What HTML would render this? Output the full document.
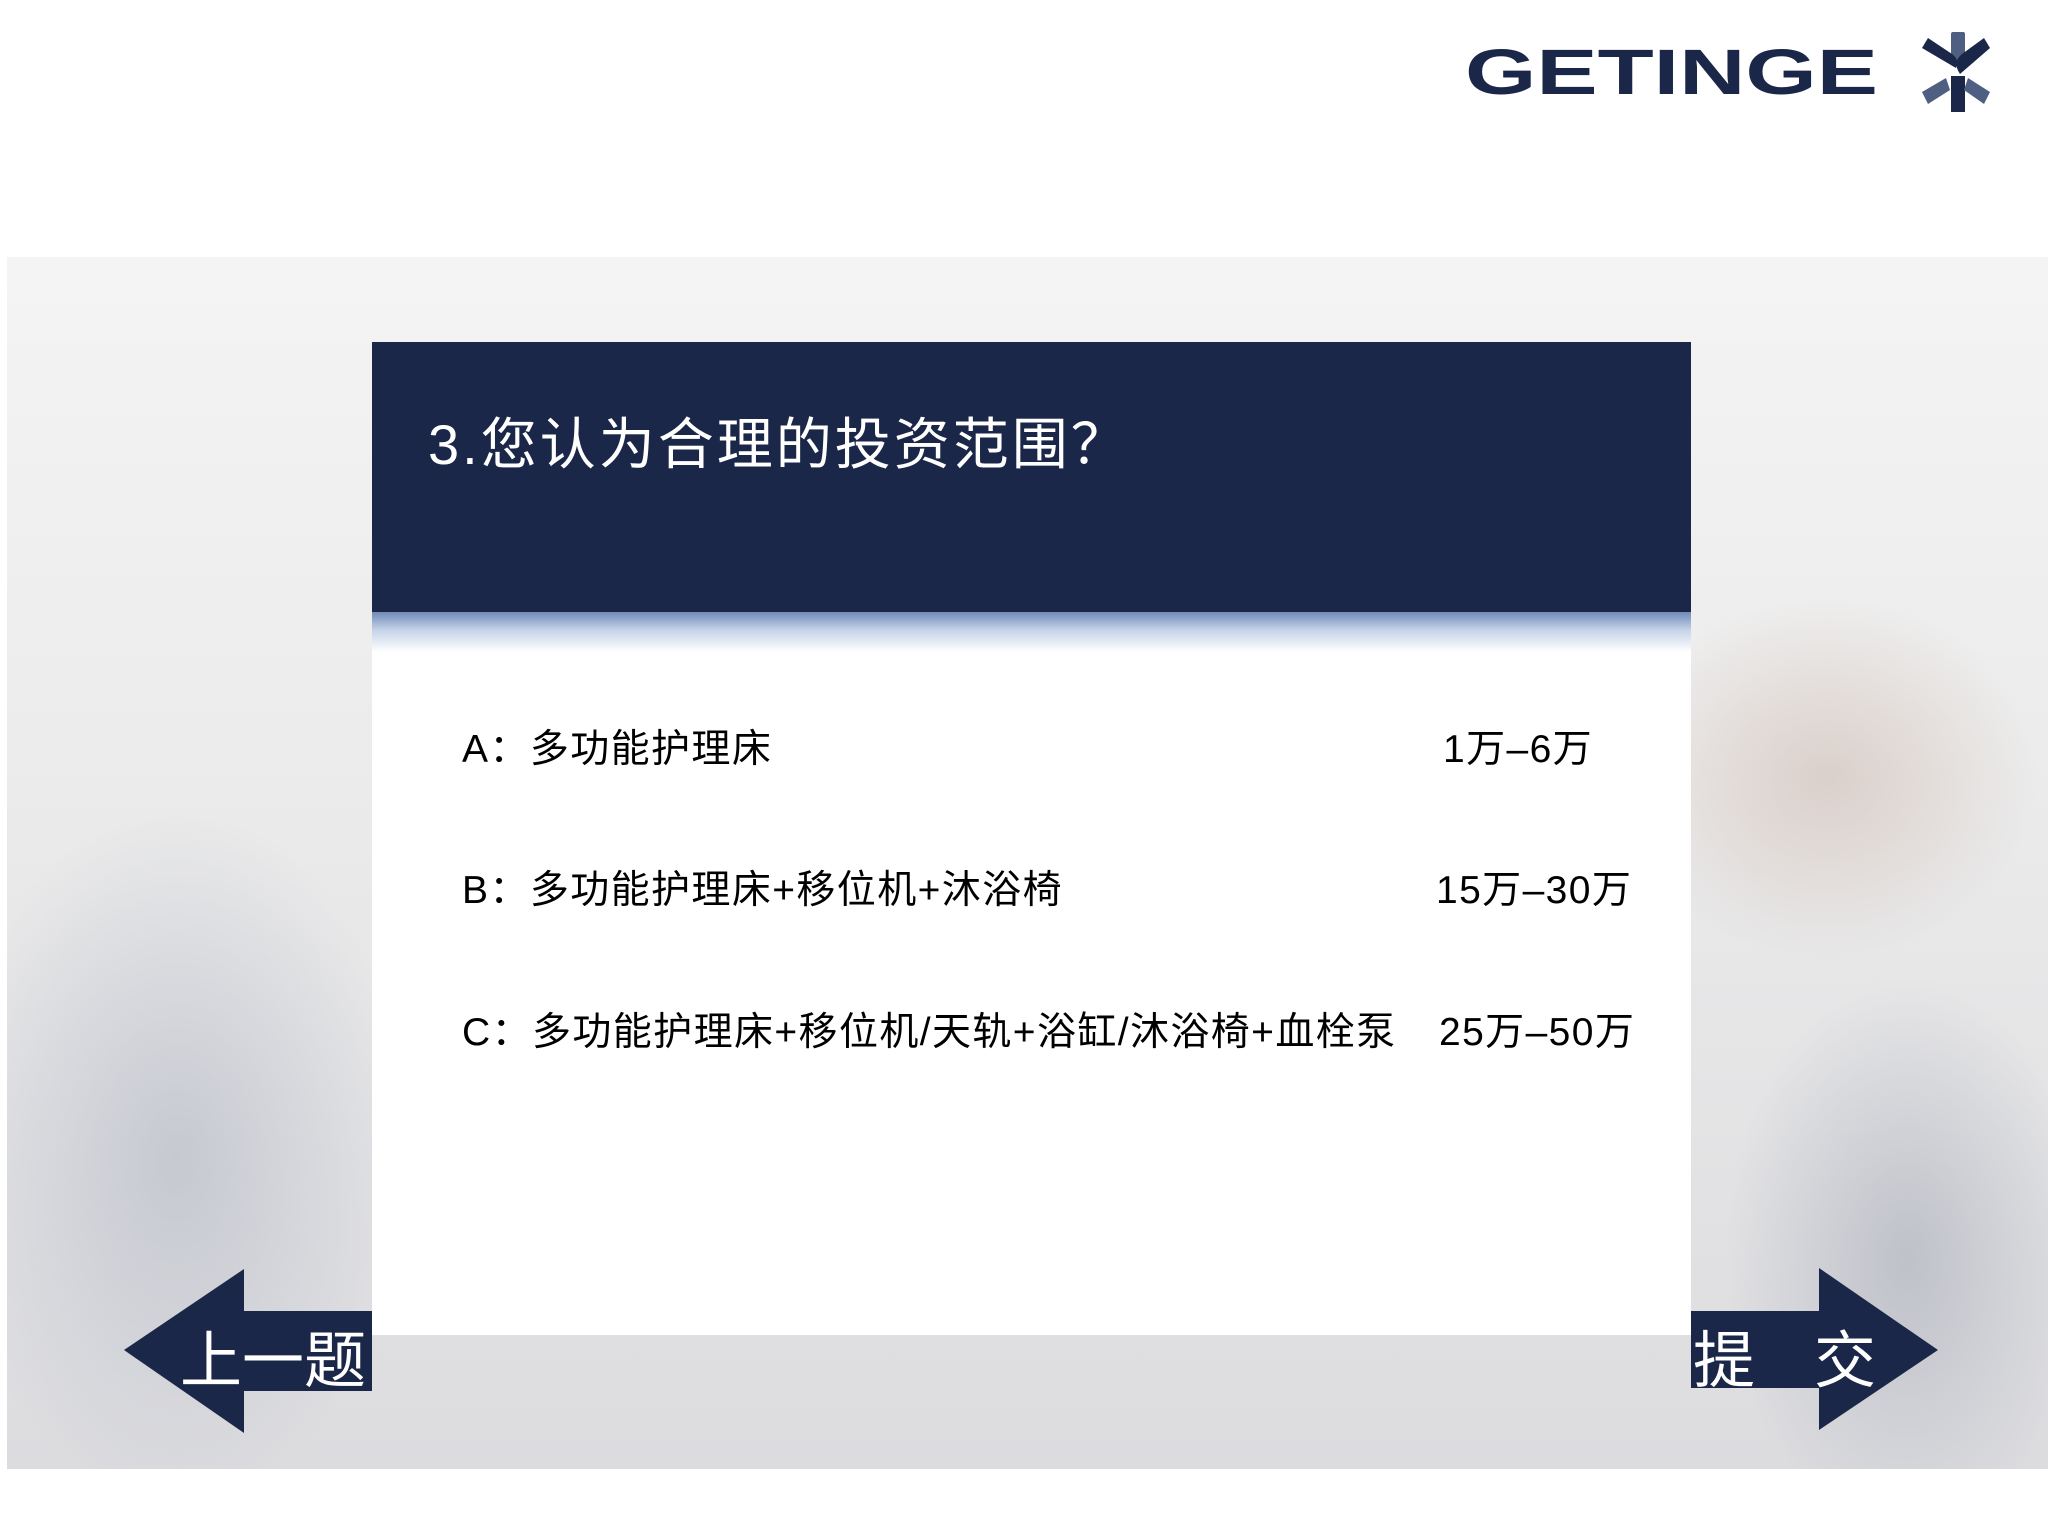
<!DOCTYPE html>
<html><head><meta charset="utf-8">
<style>
html,body{margin:0;padding:0;}
body{width:2048px;height:1536px;position:relative;overflow:hidden;background:#fff;font-family:"Liberation Sans","Noto Sans CJK SC","WenQuanYi Zen Hei",sans-serif;}
.bg{position:absolute;left:7px;top:257px;width:2041px;height:1212px;overflow:hidden;
background:
radial-gradient(ellipse 300px 260px at 1820px 520px, rgba(205,185,175,0.55), transparent 70%),
radial-gradient(ellipse 260px 400px at 1900px 1000px, rgba(150,155,170,0.45), transparent 70%),
radial-gradient(ellipse 330px 500px at 170px 900px, rgba(170,175,190,0.5), transparent 70%),
radial-gradient(ellipse 250px 250px at 1100px 1400px, rgba(190,140,110,0.45), transparent 70%),
radial-gradient(ellipse 700px 200px at 1300px 1420px, rgba(160,165,180,0.45), transparent 70%),
radial-gradient(ellipse 600px 200px at 500px 1420px, rgba(185,180,185,0.45), transparent 70%),
linear-gradient(180deg,#f4f4f4 0%,#ececec 40%,#dcdcdf 100%);}
.card{position:absolute;left:372px;top:342px;width:1319px;height:993px;background:#fff;}
.head{position:absolute;left:0;top:0;width:1319px;height:270px;background:#1b2748;}
.grad{position:absolute;left:0;top:270px;width:1319px;height:40px;background:linear-gradient(180deg,#6f8bb8 0%,#c5d3e8 45%,#fff 100%);}
.title{position:absolute;left:56px;top:58px;color:#fff;font-size:56px;letter-spacing:3px;white-space:nowrap;}
.opt{position:absolute;font-size:39px;letter-spacing:1.4px;color:#000;white-space:nowrap;}
.arrowtxt{position:absolute;color:#fff;font-size:62px;font-family:"Noto Sans CJK SC",sans-serif;white-space:nowrap;}
</style></head><body>
<div class="bg"></div>
<div class="card">
  <div class="head"><div class="title">3.您认为合理的投资范围？</div></div>
  <div class="grad"></div>
</div>
<div class="opt" style="left:462px;top:718px;">A：多功能护理床</div>
<div class="opt" style="left:1443px;top:718px;">1万–6万</div>
<div class="opt" style="left:462px;top:859px;">B：多功能护理床+移位机+沐浴椅</div>
<div class="opt" style="left:1436px;top:859px;">15万–30万</div>
<div class="opt" style="left:462px;top:1001px;">C：多功能护理床+移位机/天轨+浴缸/沐浴椅+血栓泵</div>
<div class="opt" style="left:1439px;top:1001px;">25万–50万</div>

<svg style="position:absolute;left:0;top:0" width="2048" height="1536">
  <polygon points="124,1350 244,1269 244,1311 372,1311 372,1391 244,1391 244,1433" fill="#1b2748"/>
  <polygon points="1938,1350 1819,1268 1819,1311 1691,1311 1691,1388 1819,1388 1819,1430" fill="#1b2748"/>
  <text x="1465" y="94" font-family="Liberation Sans,sans-serif" font-size="64" font-weight="bold" fill="#1b2748" textLength="413" lengthAdjust="spacingAndGlyphs">GETINGE</text>
  <g transform="translate(1956,72)">
    <rect x="-5" y="-40" width="14" height="34" fill="#4f5f82" rx="2"/>
    <rect x="-5" y="4" width="14" height="36" fill="#1b2748"/>
    <path d="M-34,-24 L-28,-34 L-4,-18 Q4,-12 0,-4 Z" fill="#1b2748"/>
    <path d="M34,-24 L28,-34 L6,-18 Q-4,-10 4,2 Z" fill="#1b2748"/>
    <path d="M-34,20 L-28,32 L-6,18 L-10,6 Z" fill="#4f5f82"/>
    <path d="M34,20 L28,32 L8,18 L12,6 Z" fill="#4f5f82"/>
  </g>
</svg>
<div class="arrowtxt" style="left:180px;top:1310px;">上一题</div>
<div class="arrowtxt" style="left:1693px;top:1310px;">提</div>
<div class="arrowtxt" style="left:1814px;top:1310px;">交</div>
</body></html>
